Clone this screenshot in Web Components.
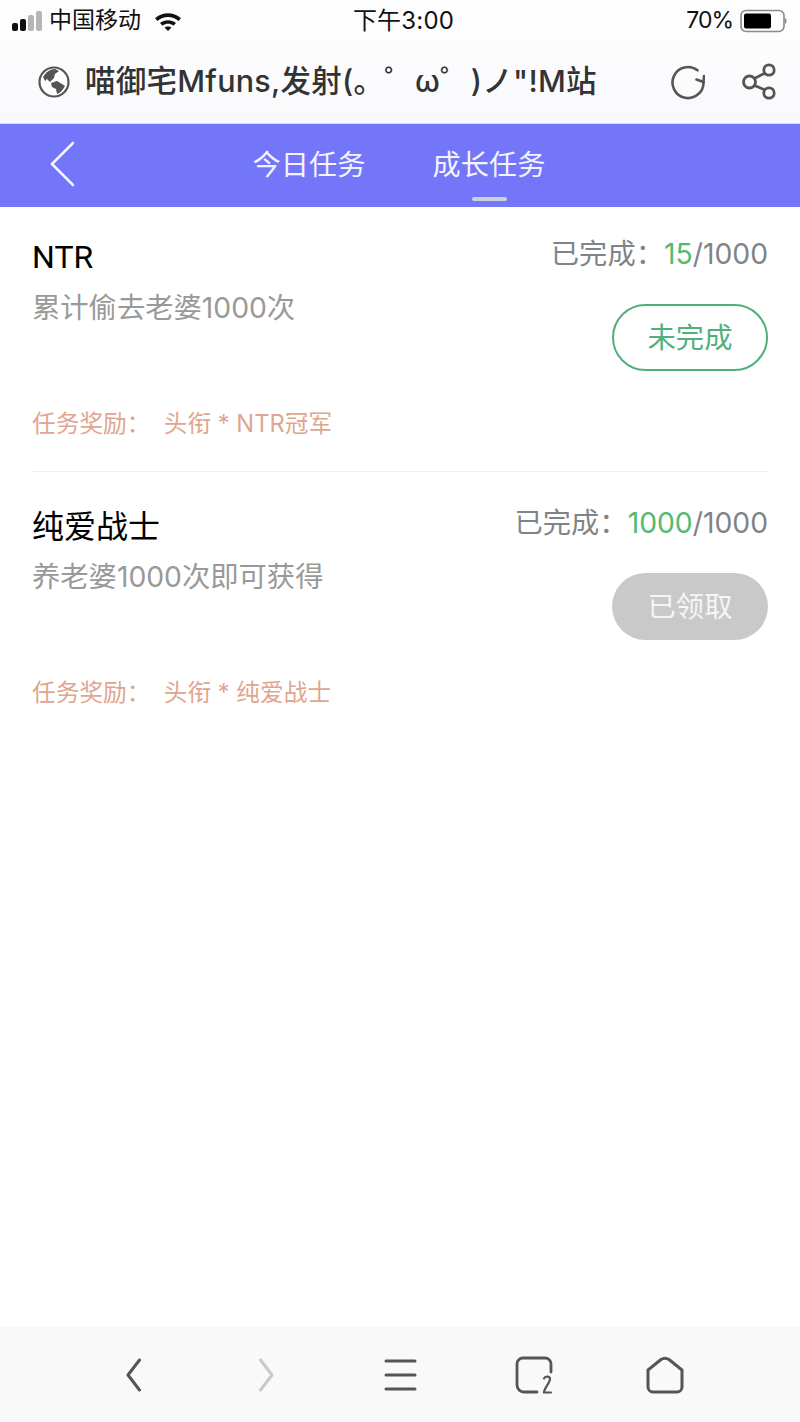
<!DOCTYPE html>
<html lang="zh"><head><meta charset="utf-8"><style>
html,body{margin:0;padding:0;background:#fff}
body{width:800px;height:1422px;display:flex;flex-direction:column;overflow:hidden;font-family:"Inter","Noto Sans CJK SC",sans-serif}
main-list{flex:1}
</style></head><body>
<status-bar></status-bar>
<address-bar></address-bar>
<task-tabs></task-tabs>
<main-list>
<task-card name="NTR" desc="累计偷去老婆1000次" done="15" total="1000" reward="头衔 * NTR冠军" state="未完成"></task-card>
<task-card name="纯爱战士" desc="养老婆1000次即可获得" done="1000" total="1000" reward="头衔 * 纯爱战士" state="已领取" claimed last></task-card>
</main-list>
<bottom-bar></bottom-bar>
<script>
const def=(n,html)=>customElements.define(n,class extends HTMLElement{connectedCallback(){if(this.shadowRoot)return;const r=this.attachShadow({mode:'open'});r.innerHTML=typeof html==='function'?html(this):html;}});
const F='"Inter","Noto Sans CJK SC",sans-serif';
def('status-bar',`<style>
:host{display:grid;grid-template-columns:1fr auto 1fr;align-items:center;height:41px;padding:0 13px 0 12px;background:#fdfdfe;color:#111;font:23px/41px ${F}}
.l,.r{display:flex;align-items:center}.r{justify-content:flex-end}
.bars{display:flex;align-items:flex-end;gap:2px;height:20px;margin-right:7px}
.bars i{display:block;width:6px;border-radius:2px;background:#111}
.bars i.o{background:#b5b5b5}
.t{font-size:24px;letter-spacing:.2px;margin-left:8px}
.p{font-size:23px;letter-spacing:-1px;margin-right:7px}
svg{display:block}
</style>
<div class="l"><div class="bars"><i style="height:8px"></i><i style="height:12px"></i><i class="o" style="height:16px"></i><i class="o" style="height:20px"></i></div><span>中国移动</span>
<svg style="margin-left:13px" width="28" height="22" viewBox="0 0 28 22"><path d="M1 8.200C8.500 1.500 19.500 1.500 27 8.200L24.500 11C18.400 5.800 9.600 5.800 3.500 11Z" fill="#111"/><path d="M6 13C10.700 9.200 17.300 9.200 22 13L19.400 15.700C16.200 13.200 11.800 13.200 8.600 15.700Z" fill="#111"/><path d="M10.500 17.500C12.500 16 15.500 16 17.500 17.500L14 21Z" fill="#111"/></svg></div>
<div class="t">下午3:00</div>
<div class="r"><span class="p">70%</span><svg width="47" height="24" viewBox="0 0 47 24"><rect x="1" y="1.500" width="43" height="21" rx="5" fill="none" stroke="#8a8a8a" stroke-width="1.600"/><rect x="4" y="4.500" width="27" height="15" rx="2" fill="#000"/><path d="M45 9c2 .5 2 5.500 0 6z" fill="#888"/></svg></div>`);
def('address-bar',`<style>
:host{display:flex;align-items:center;height:83px;padding:0 0 0 38px;background:linear-gradient(#fdfdfe,#f8f9fc);border-bottom:1px solid #d9d9e2;box-sizing:border-box;color:#333}
.g{flex:none;margin-right:15px}
.title{flex:1;font:500 30.500px/40px ${F};white-space:pre;color:#333;letter-spacing:.25px;margin-top:-2px}
.ic{display:flex;gap:37px;padding-right:24px;align-items:center}
svg{display:block}
</style>
<svg class="g" width="32" height="32" viewBox="0 0 32 32"><circle cx="16" cy="16" r="14.500" fill="#fff" stroke="#555" stroke-width="2.200"/><path d="M5 11C8 6 12 3 17 3L21 5L17 8L16 12L12 16L9 13L7 15Z" fill="#555"/><path d="M13 17L19 15L24 18L27 20C25 24 22 27 19 28L18 23L14 21Z" fill="#555"/></svg>
<div class="title">喵御宅Mfuns,发射(。゜ω゜)ノ"!M站</div>
<div class="ic"><svg width="35" height="36" viewBox="0 0 35 36" fill="none" stroke="#555" stroke-width="2.600" stroke-linecap="round" stroke-linejoin="round"><path d="M27.500 6.300A15.500 15.500 0 1 0 33.500 18"/><path d="M26.500 15.500L33.500 18L34 12"/></svg><svg width="34" height="38" viewBox="0 0 34 38" fill="none" stroke="#555" stroke-width="2.800"><circle cx="7.500" cy="19" r="6"/><circle cx="27" cy="7" r="5.200"/><circle cx="27" cy="30" r="5.200"/><path d="M12.500 15.500L23 10M12.500 22.500L23 27"/></svg></div>`);
def('task-tabs',`<style>
:host{display:block;height:83px;background:#7376f8;color:#f4f4ff;font:28.200px/82px ${F}}
.row{position:relative;display:flex;justify-content:center;gap:66px;height:83px}
a{position:relative;display:block;width:114px;text-align:center;white-space:nowrap;left:-1px}
.on::after{content:"";position:absolute;left:40px;bottom:6px;width:35px;height:4px;border-radius:2px;background:#ccd0dc}
svg{position:absolute;left:50px;top:17px}
</style><div class="row"><svg width="26" height="46" viewBox="0 0 26 46" fill="none" stroke="#f4f4ff" stroke-width="2.600" stroke-linecap="round"><path d="M23 2L2 23L23 44"/></svg><a>今日任务</a><a class="on">成长任务</a></div>`);
def('task-card',h=>{const a=n=>h.getAttribute(n),c=h.hasAttribute('claimed'),l=h.hasAttribute('last');return `<style>
:host{display:block;padding:0 32px}
.card{display:flex;flex-direction:column;height:${l?264:265}px;box-sizing:border-box;padding-top:${l?31:27}px;${l?'':'border-bottom:1px solid #f0f0f0'}}
.top{display:flex;justify-content:space-between;align-items:flex-start;height:44px}
.n{font:32px/46px Roboto,"Noto Sans CJK SC",sans-serif;color:#000;${l?'margin-top:1px':''}}
.p{font:28.300px/38px ${F};color:#808487;white-space:pre;margin-top:1px}
.p b{font-weight:400;color:#55b96e}
.mid{display:flex;justify-content:space-between;height:99px}
.d{font:28.300px/40px ${F};color:#999;margin-top:10px}
.btn{box-sizing:border-box;width:156px;height:67px;border-radius:34px;margin-top:26px;padding-top:2px;display:flex;align-items:center;justify-content:center;font:28.300px/1 ${F};${c?'background:#c9c9c9;color:#f5f5f5':'border:2px solid #4fb07c;color:#4fb07c'}}
.r{font:23.700px/32px ${F};color:#dfa68f;white-space:pre;margin-top:31px}
</style><div class="card"><div class="top"><div class="n">${a('name')}</div><div class="p">已完成：<b>${a('done')}</b>/${a('total')}</div></div>
<div class="mid"><div class="d">${a('desc')}</div><div class="btn">${a('state')}</div></div>
<div class="r">任务奖励：  ${a('reward')}</div></div>`});
def('main-list','<slot></slot>');
def('bottom-bar',`<style>
:host{display:block;height:95px;background:#f9f9f9}
svg{display:block}
.row{display:flex;align-items:center;height:95px;padding-left:125px}
</style><div class="row">
<svg style="margin-right:116px" width="17" height="34" viewBox="0 0 17 34" fill="none" stroke="#555" stroke-width="3" stroke-linecap="round" stroke-linejoin="round"><path d="M14.500 2L3 17L14.500 32"/></svg>
<svg style="margin-right:109px" width="17" height="34" viewBox="0 0 17 34" fill="none" stroke="#c9c9c9" stroke-width="3" stroke-linecap="round" stroke-linejoin="round"><path d="M2.500 2L14 17L2.500 32"/></svg>
<svg style="margin-right:98px" width="33" height="34" viewBox="0 0 33 34" fill="none" stroke="#555" stroke-width="3" stroke-linecap="round"><path d="M2 3H31M2 17H31M2 31H31"/></svg>
<svg style="margin-right:93px" width="38" height="38" viewBox="0 0 38 38" fill="none" stroke="#555" stroke-width="2.800" stroke-linecap="round"><path d="M22 36H9a7 7 0 0 1-7-7V8a6 6 0 0 1 6-6h22a6 6 0 0 1 6 6v8"/><path d="M29 22.500c1-2.500 6-2.500 6 .5 0 4-6 9-6 13.500h7" stroke-width="2.200"/></svg>
<svg width="38" height="38" viewBox="0 0 38 38" fill="none" stroke="#555" stroke-width="3" stroke-linejoin="round"><path d="M2 14L15 3.500Q19 1 23 3.500L36 14V31a5 5 0 0 1-5 5H7a5 5 0 0 1-5-5Z"/></svg>
</div>`);
</script>
</body></html>
